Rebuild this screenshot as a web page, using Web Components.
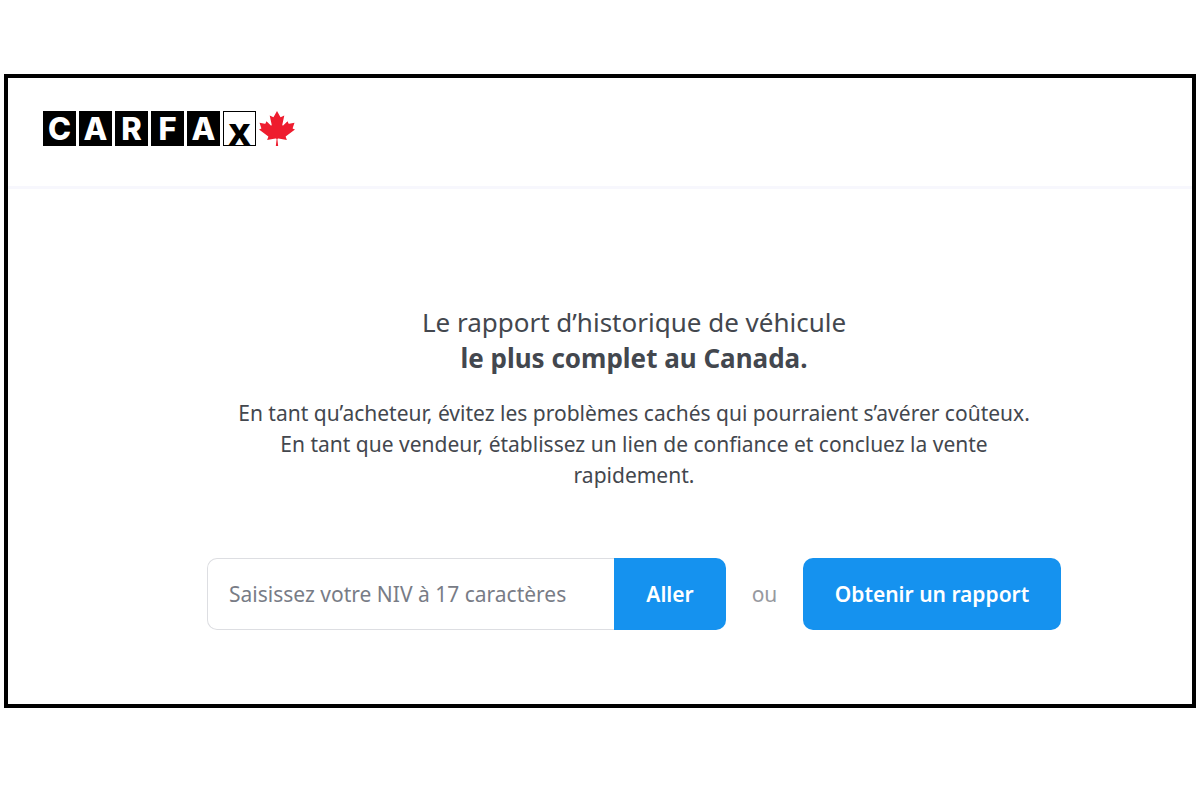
<!DOCTYPE html>
<html lang="fr">
<head>
<meta charset="utf-8">
<meta name="viewport" content="width=device-width, initial-scale=1">
<title>CARFAX Canada</title>
<style>
  body { margin: 0; background: #fff; font-family: "Noto Sans", "Open Sans", sans-serif; color: #43474e; }
</style>
</head>
<body>
<carfax-page>
  <carfax-header slot="header"><carfax-logo></carfax-logo></carfax-header>
  <carfax-hero>
    <span slot="title">Le rapport d’historique de véhicule</span>
    <strong slot="emphasis">le plus complet au Canada.</strong>
    <span slot="lead">En tant qu’acheteur, évitez les problèmes cachés qui pourraient s’avérer coûteux. En tant que vendeur, établissez un lien de confiance et concluez la vente rapidement.</span>
    <vin-search slot="search"></vin-search>
  </carfax-hero>
</carfax-page>
<script>
  function define(name, html) {
    const template = document.createElement("template");
    template.innerHTML = html;
    customElements.define(name, class extends HTMLElement {
      constructor() {
        super();
        this.attachShadow({ mode: "open" }).append(template.content.cloneNode(true));
      }
    });
  }

  define("carfax-page", `
    <style>
      :host { display: block; padding: 74px 4px 0; }
      .frame { border: 4px solid #000; background: #fff; }
    </style>
    <div class="frame"><slot name="header"></slot><main><slot></slot></main></div>
  `);

  define("carfax-header", `
    <style>
      :host { display: block; }
      header { padding: 33px 35px 40px; border-bottom: 3px solid #f7f7fd; }
    </style>
    <header><slot></slot></header>
  `);

  define("carfax-logo", `
    <style>
      :host { display: block; }
      a { display: flex; width: max-content; gap: 3px; color: #fff; text-decoration: none; }
      .tile { box-sizing: border-box; width: 33px; height: 35px; background: #000; text-align: center;
              font: 800 31px/36px Inter, "Open Sans", sans-serif; }
      .last { background: #fff; color: #000; border: 1px solid #000; font: 700 38px/36px "Open Sans", sans-serif;
              display: flex; justify-content: center; }
      svg { display: block; width: 36px; height: 35px; }
    </style>
    <a href="#" aria-label="CARFAX Canada">
      <span class="tile">C</span><span class="tile">A</span><span class="tile">R</span><span class="tile">F</span><span class="tile">A</span><span class="tile last">x</span>
      <svg viewBox="-1850 -2000 3700 3900" preserveAspectRatio="none" aria-hidden="true"><path fill="#ee1c2e" d="M-120 1900l75-733a95 95 0 0 0-111-98l-859 151 116-320a65 65 0 0 0-20-73l-941-762 212-99a65 65 0 0 0 34-79l-186-572 542 115a65 65 0 0 0 73-38l105-247 423 454a65 65 0 0 0 111-57l-204-1052 327 189a65 65 0 0 0 91-27l332-652 332 652a65 65 0 0 0 91 27l327-189-204 1052a65 65 0 0 0 111 57l423-454 105 247a65 65 0 0 0 73 38l542-115-186 572a65 65 0 0 0 34 79l212 99-941 762a65 65 0 0 0-20 73l116 320-859-151a95 95 0 0 0-111 98l75 733z"/></svg>
    </a>
  `);

  define("carfax-hero", `
    <style>
      :host { display: block; padding: 115px 24px 74px 92px; }
      section { max-width: 854px; margin: 0 auto; text-align: center; }
      h1 { margin: 0 0 22px; font-size: 26px; line-height: 36px; font-weight: 400; }
      h1 span { display: block; }
      p { max-width: 800px; margin: 0 auto 67px; font-size: 21px; line-height: 31px; }
    </style>
    <section>
      <h1><span><slot name="title"></slot></span><span><slot name="emphasis"></slot></span></h1>
      <p><slot name="lead"></slot></p>
      <slot name="search"></slot>
    </section>
  `);

  define("vin-search", `
    <style>
      :host { display: block; }
      form { display: flex; align-items: stretch; height: 72px; font-size: 21px; }
      .field { display: flex; flex: 1; min-width: 0; }
      input { box-sizing: border-box; flex: 1; min-width: 0; padding: 0 21px; border: 1px solid #dddee2; border-right: 0;
              border-radius: 10px 0 0 10px; background: #fff; color: #43474e; font: inherit; }
      input::placeholder { color: #787c86; opacity: 1; }
      button { box-sizing: border-box; padding: 0; border: 0; background: #1592ef; color: #fff; font: inherit; font-weight: 600; cursor: pointer; }
      .go { width: 112px; border-radius: 0 10px 10px 0; }
      .or { display: flex; align-items: center; justify-content: center; width: 77px; color: #97999f; }
      .report { width: 258px; border-radius: 10px; }
    </style>
    <form onsubmit="return false">
      <div class="field">
        <input type="text" maxlength="17" placeholder="Saisissez votre NIV à 17 caractères" aria-label="Saisissez votre NIV à 17 caractères">
        <button class="go" type="submit">Aller</button>
      </div>
      <span class="or">ou</span>
      <button class="report" type="button">Obtenir un rapport</button>
    </form>
  `);
</script>
</body>
</html>
